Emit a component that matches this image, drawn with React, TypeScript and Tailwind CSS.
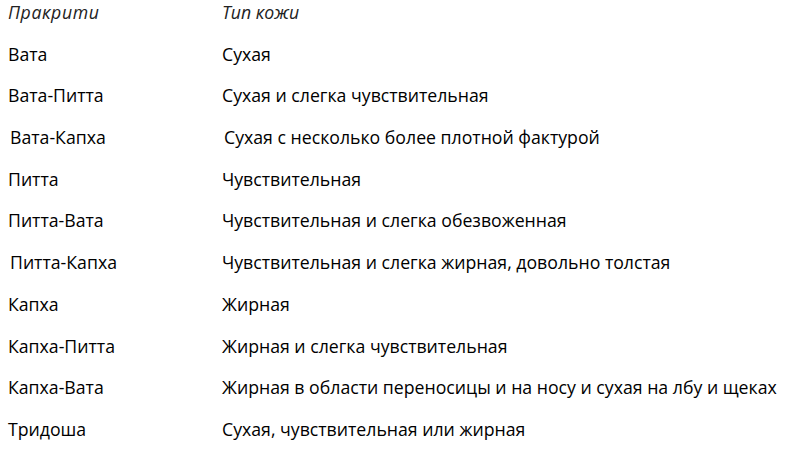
const rows: [string, string, string?, string?][] = [
  ["Вата", "Сухая"],
  ["Вата-Питта", "Сухая и слегка чувствительная"],
  ["Вата-Капха", "Сухая с несколько более плотной фактурой", "pl-[2px]", "pl-[2px]"],
  ["Питта", "Чувствительная"],
  ["Питта-Вата", "Чувствительная и слегка обезвоженная"],
  ["Питта-Капха", "Чувствительная и слегка жирная, довольно толстая", "pl-[2px]"],
  ["Капха", "Жирная"],
  ["Капха-Питта", "Жирная и слегка чувствительная"],
  ["Капха-Вата", "Жирная в области переносицы и на носу и сухая на лбу и щеках"],
  ["Тридоша", "Сухая, чувствительная или жирная"],
];

export default function App() {
  return (
    <div className="w-[790px] h-[450px] overflow-hidden bg-white text-black font-['Open_Sans',sans-serif] text-[17.7px]">
      <div className="grid grid-cols-[214px_1fr] gap-y-[17.7px] leading-[24px] pl-[8px]">
        <div className="italic tracking-[0.6px] text-[#222]">Пракрити</div>
        <div className="italic text-[#222]">Тип кожи</div>
        {rows.map(([prakriti, skin, lp, rp]) => (
          <div key={prakriti} className="contents">
            <div className={lp ?? ""}>{prakriti}</div>
            <div className={rp ?? ""}>{skin}</div>
          </div>
        ))}
      </div>
    </div>
  );
}
